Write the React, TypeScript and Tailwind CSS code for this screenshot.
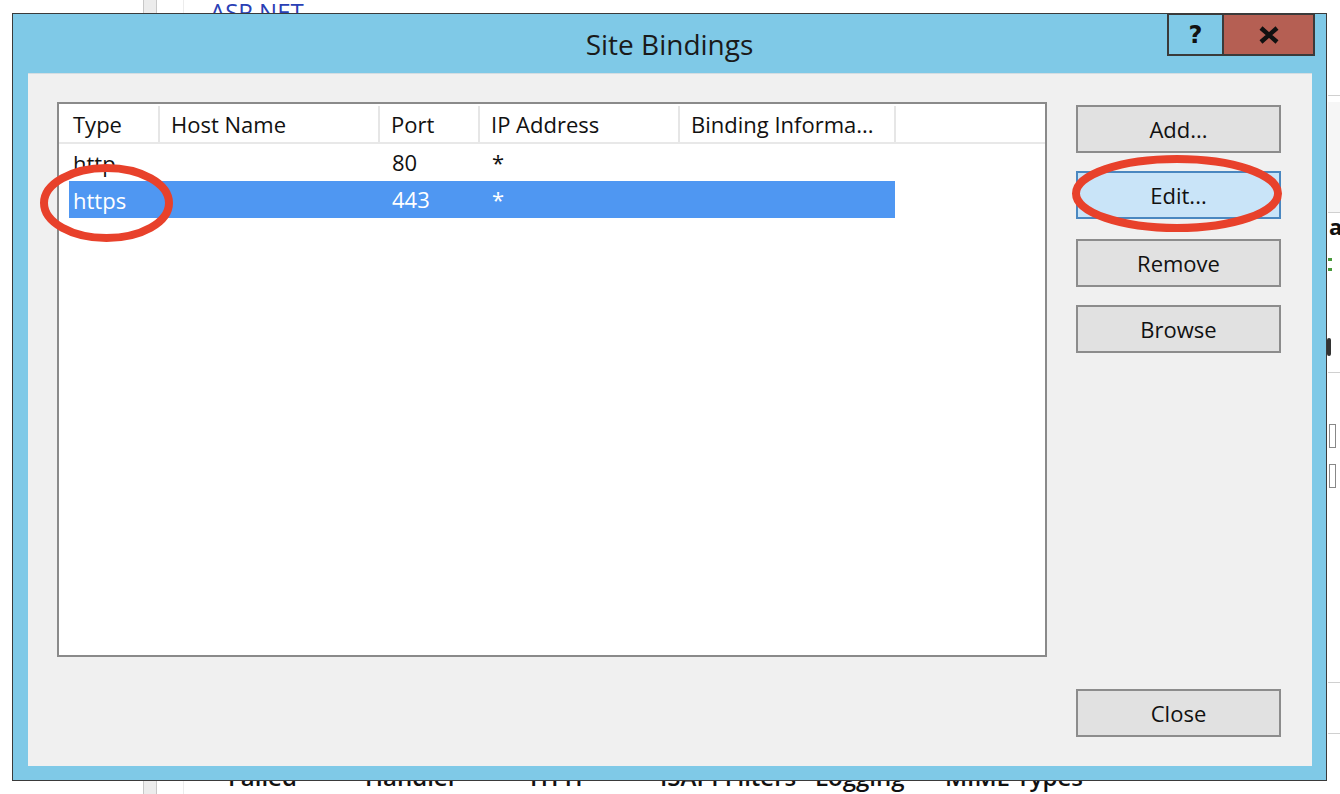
import React from 'react';

const columns = [
  { label: 'Type', width: 'w-[98px]' },
  { label: 'Host Name', width: 'w-[220px]' },
  { label: 'Port', width: 'w-[100px]' },
  { label: 'IP Address', width: 'w-[200px]' },
  { label: 'Binding Informa...', width: 'w-[216px]' },
];

const bindings = [
  { type: 'http', host: '', port: '80', ip: '*', info: '', selected: false },
  { type: 'https', host: '', port: '443', ip: '*', info: '', selected: true },
];

const featureLabels = [
  { label: 'Failed', left: 'left-[228px]' },
  { label: 'Handler', left: 'left-[365px]' },
  { label: 'HTTP', left: 'left-[530px]' },
  { label: 'ISAPI Filters', left: 'left-[660px]' },
  { label: 'Logging', left: 'left-[815px]' },
  { label: 'MIME Types', left: 'left-[945px]' },
];

function DialogButton({ label, active = false, className = '' }: { label: string; active?: boolean; className?: string }) {
  return (
    <button
      className={`w-[205px] h-[48px] border-2 text-[22px] text-[#111] flex items-center justify-center ${
        active ? 'bg-[#c9e4f8] border-[#4a87c0]' : 'bg-[#e1e1e1] border-[#8c8c8c]'
      } ${className}`}
    >
      {label}
    </button>
  );
}

export default function App() {
  return (
    <div className="relative w-[1340px] h-[794px] bg-white overflow-hidden font-['Open_Sans','Noto_Sans',sans-serif]">
      {/* IIS manager behind the dialog */}
      <div className="absolute left-[143px] top-0 w-[14px] h-[794px] bg-[#ececec] border-x border-[#c8c8c8]" />
      <div className="absolute left-[183px] top-0 w-px h-[794px] bg-[#ececec]" />
      <div className="absolute left-[210px] top-[-6px] text-[24px] text-[#2a3fb5]">ASP.NET</div>
      {featureLabels.map((f) => (
        <div key={f.label} className={`absolute ${f.left} top-[759px] text-[24px] font-semibold text-[#111]`}>
          {f.label}
        </div>
      ))}
      <div className="absolute left-[1328px] top-[95px] w-[12px] h-px bg-[#d0d0d0]" />
      <div className="absolute left-[1328px] top-[102px] w-[12px] h-[110px] bg-[#f6f6f6]" />
      <div className="absolute left-[1328px] top-[212px] w-[12px] h-px bg-[#d0d0d0]" />
      <div className="absolute left-[1329px] top-[210px] text-[22px] font-bold text-[#111]">a</div>
      <div className="absolute left-[1328px] top-[258px] w-[4px] h-[3px] bg-[#4a9a3c]" />
      <div className="absolute left-[1328px] top-[268px] w-[4px] h-[3px] bg-[#4a9a3c]" />
      <div className="absolute left-[1327px] top-[338px] w-[4px] h-[18px] bg-[#333] rounded" />
      <div className="absolute left-[1328px] top-[372px] w-[12px] h-px bg-[#d0d0d0]" />
      <div className="absolute left-[1329px] top-[424px] w-[7px] h-[24px] border border-[#888] bg-white" />
      <div className="absolute left-[1329px] top-[464px] w-[7px] h-[24px] border border-[#888] bg-white" />
      <div className="absolute left-[1328px] top-[682px] w-[12px] h-px bg-[#d0d0d0]" />
      <div className="absolute left-[1328px] top-[733px] w-[12px] h-px bg-[#d0d0d0]" />

      {/* Site Bindings window */}
      <div className="absolute left-[12px] top-[13px] w-[1315px] h-[768px] border border-[#3a3a3a] bg-[#7fc9e7] flex flex-col">
        <div className="relative h-[59px] shrink-0 flex items-center justify-center">
          <span className="text-[28px] text-[#1a1a1a] mt-[1px]">Site Bindings</span>
          <div className="absolute top-[-1px] right-[11px] flex">
            <div className="w-[55px] h-[43px] border-2 border-[#3a3a3a] border-r-0 flex items-center justify-center text-[24px] font-bold text-[#111] font-['DejaVu_Sans',sans-serif]">
              ?
            </div>
            <div className="w-[93px] h-[43px] border-2 border-[#3a3a3a] bg-[#b55f53] flex items-center justify-center">
              <svg width="22" height="18" viewBox="0 0 22 18">
                <path d="M3 2 L19 16 M19 2 L3 16" stroke="#111" strokeWidth="4.5" strokeLinecap="butt" />
              </svg>
            </div>
          </div>
        </div>

        <div className="flex-1 ml-[15px] mr-[14px] mb-[14px] bg-[#f0f0f0] border-t border-[#d4dde2] flex pl-[29px] pr-[31px] pt-[28px] pb-[29px] gap-[29px]">
          {/* List view */}
          <div className="w-[990px] h-[555px] border-2 border-[#8a8a8a] bg-white flex flex-col">
            <div className="flex h-[40px] pt-[2px] pl-[3px] border-b-2 border-[#e8e8e8]">
              {columns.map((c) => (
                <div
                  key={c.label}
                  className={`${c.width} h-full border-r-2 border-[#e6e6e6] pl-[11px] flex items-center text-[22px] text-[#111] whitespace-nowrap`}
                >
                  {c.label}
                </div>
              ))}
            </div>
            <div className="flex flex-col pl-[10px]">
              {bindings.map((b) => (
                <div
                  key={b.type}
                  className={`flex w-[826px] h-[37px] items-center text-[22px] ${
                    b.selected ? 'bg-[#4f97f2] text-white' : 'text-[#111]'
                  }`}
                >
                  <div className="w-[96px] pl-[4px] leading-none">{b.type}</div>
                  <div className="w-[227px]">{b.host}</div>
                  <div className="w-[100px]">{b.port}</div>
                  <div className="w-[200px]">{b.ip}</div>
                  <div className="flex-1">{b.info}</div>
                </div>
              ))}
            </div>
          </div>

          {/* Buttons */}
          <div className="flex flex-col w-[205px]">
            <DialogButton label="Add..." className="mt-[3px]" />
            <DialogButton label="Edit..." active className="mt-[18px]" />
            <DialogButton label="Remove" className="mt-[20px]" />
            <DialogButton label="Browse" className="mt-[18px]" />
            <DialogButton label="Close" className="mt-auto" />
          </div>
        </div>
      </div>

      {/* Red highlight annotations */}
      <svg className="absolute left-0 top-0 pointer-events-none" width="1340" height="794">
        <ellipse cx="106.5" cy="203" rx="62.5" ry="35" fill="none" stroke="#e8412b" strokeWidth="8" />
        <ellipse cx="1177" cy="193.5" rx="101" ry="34.5" fill="none" stroke="#e8412b" strokeWidth="8" />
      </svg>
    </div>
  );
}
